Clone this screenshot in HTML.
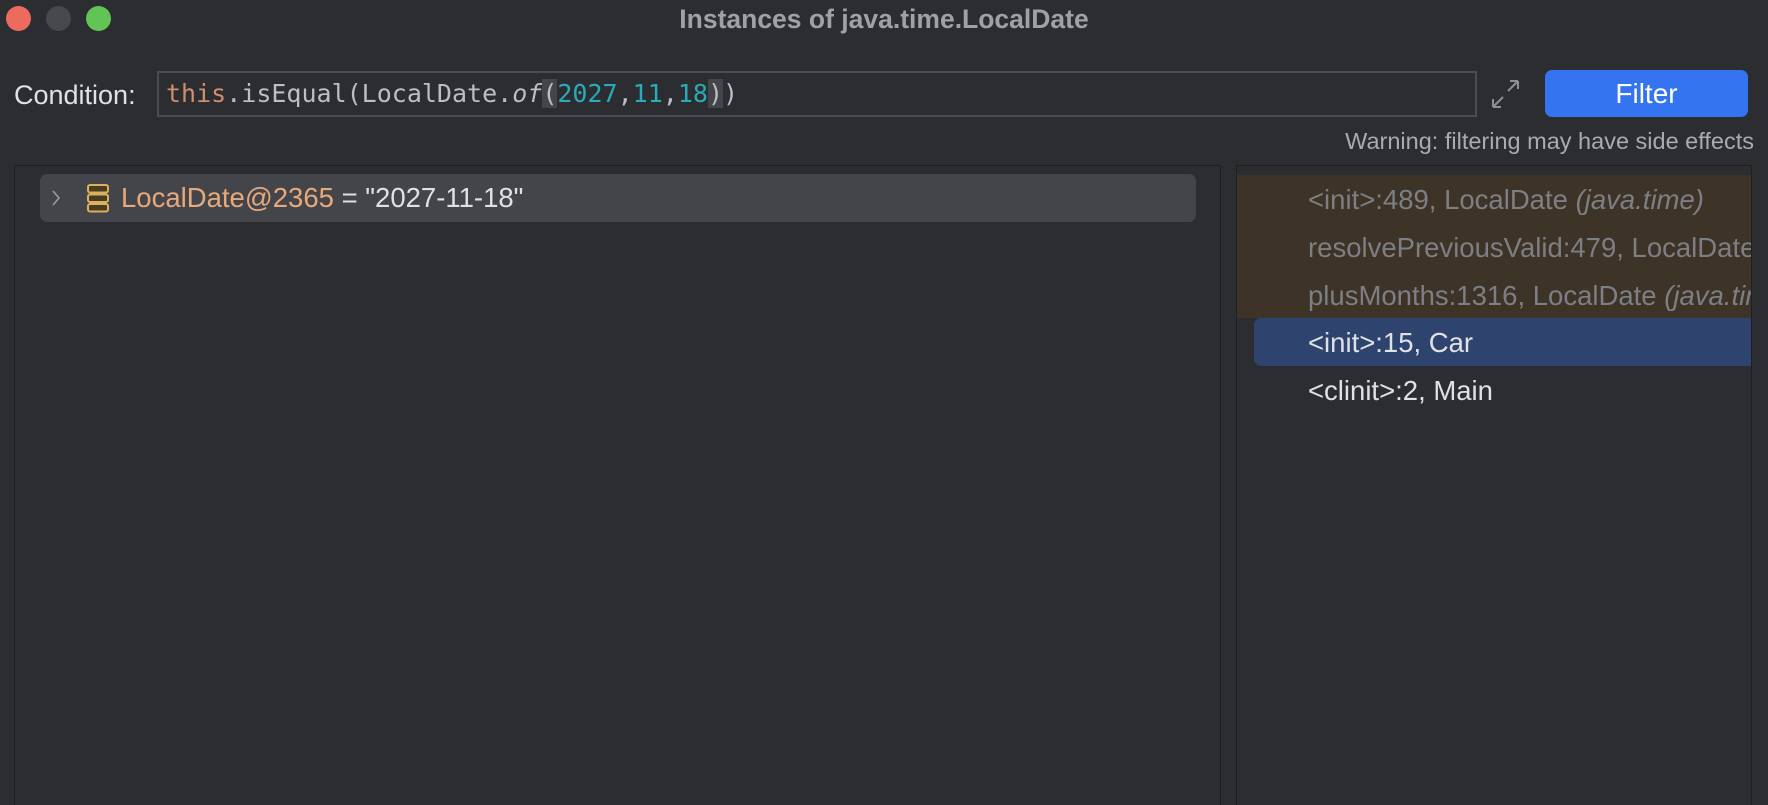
<!DOCTYPE html>
<html><head><meta charset="utf-8"><style>
*{margin:0;padding:0;box-sizing:border-box}
body{width:1768px;height:788px;background:#2b2d30;position:relative;overflow:hidden;font-family:"Liberation Sans",sans-serif;color:#dfe1e5}
.a{position:absolute}
.dot{position:absolute;top:6px;width:25px;height:25px;border-radius:50%}
.mono{font-family:"DejaVu Sans Mono","Liberation Mono",monospace}
.row{position:absolute;left:1308px;font-size:27.5px;line-height:47px;white-space:nowrap}
</style></head><body>
<div class="dot" style="left:6px;background:#ec6a5e"></div>
<div class="dot" style="left:46px;background:#48494c"></div>
<div class="dot" style="left:86px;background:#61c454"></div>
<div class="a" style="left:0;width:1768px;top:3px;text-align:center;font-size:26.5px;font-weight:bold;color:#9fa1a5;line-height:32px">Instances of java.time.LocalDate</div>

<div class="a" style="left:14px;top:78px;font-size:27px;line-height:34px;color:#dfe1e5">Condition:</div>
<div class="a" style="left:157px;top:71px;width:1320px;height:46px;border:2px solid #4a4c50;background:#2b2d30"></div>
<div class="a mono" style="left:166px;top:78px;font-size:25px;line-height:32px;color:#bcbec4;white-space:pre"><span style="color:#cf8e6d">this</span>.isEqual(LocalDate.<i>of</i><span style="background:#43454a">(</span><span style="color:#2aacb8">2027</span>,<span style="color:#2aacb8">11</span>,<span style="color:#2aacb8">18</span><span style="background:#43454a">)</span>)</div>
<svg class="a" style="left:1480px;top:70px" width="50" height="50" viewBox="0 0 50 50" fill="none" stroke="#8c8f94" stroke-width="2"><path d="M13 37L23 27M13 37V29M13 37H21M38 11L28 21M38 11V19M38 11H30"/></svg>
<div class="a" style="left:1545px;top:70px;width:203px;height:47px;background:#3574f0;border-radius:7px;color:#fff;font-size:28px;text-align:center;line-height:47px">Filter</div>
<div class="a" style="right:14px;top:126px;font-size:23.5px;line-height:30px;color:#a8abb0">Warning: filtering may have side effects</div>

<div class="a" style="left:14px;top:165px;width:1207px;height:640px;border:1px solid #1e1f22;border-bottom:none"></div>
<div class="a" style="left:40px;top:174px;width:1156px;height:48px;background:#43454a;border-radius:7px"></div>
<svg class="a" style="left:48px;top:188px" width="16" height="20"><path d="M5 3L11 10L5 17" stroke="#9a9da2" stroke-width="1.6" fill="none"/></svg>
<svg class="a" style="left:86px;top:183px" width="25" height="31" fill="#4a3d22" stroke="#d9b15f" stroke-width="2"><rect x="2" y="2" width="20" height="7.5" rx="2"/><rect x="2" y="11.5" width="20" height="7.5" rx="2"/><rect x="2" y="21" width="20" height="7.5" rx="2"/></svg>
<div class="a" style="left:121px;top:181px;font-size:27.5px;line-height:34px;white-space:nowrap"><span style="color:#e8a97a">LocalDate@2365</span> = "2027-11-18"</div>

<div class="a" style="left:1236px;top:165px;width:516px;height:640px;border:1px solid #1e1f22;border-bottom:none;overflow:hidden">
<div class="a" style="left:0;top:9px;width:520px;height:143px;background:#3d3326"></div>
<div class="a" style="left:17px;top:152px;width:520px;height:48px;background:#2e436e;border-radius:7px"></div>
</div>
<div class="a" style="left:1237px;top:174px;width:514px;height:260px;overflow:hidden">
<div class="row" style="left:71px;top:2px;color:#7c7f85">&lt;init&gt;:489, LocalDate <i>(java.time)</i></div>
<div class="row" style="left:71px;top:50px;color:#7c7f85">resolvePreviousValid:479, LocalDate <i>(java.time)</i></div>
<div class="row" style="left:71px;top:98px;color:#7c7f85">plusMonths:1316, LocalDate <i>(java.time)</i></div>
<div class="row" style="left:71px;top:145px;color:#dfe1e5">&lt;init&gt;:15, Car</div>
<div class="row" style="left:71px;top:193px;color:#dfe1e5">&lt;clinit&gt;:2, Main</div>
</div>
</body></html>
